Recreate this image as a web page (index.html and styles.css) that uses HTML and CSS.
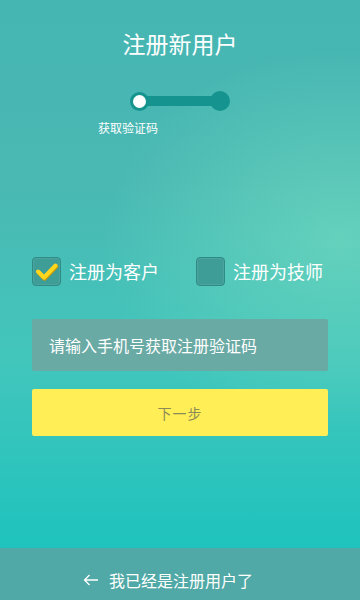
FILE: index.html
```html
<!DOCTYPE html>
<html lang="zh">
<head>
<meta charset="utf-8">
<link rel="stylesheet" href="styles.css">
</head>
<body>
<div class="page">
  <h1 class="title">注册新用户</h1>
  <div class="stepper">
    <span class="dot dot-active"></span>
    <span class="bar"></span>
    <span class="dot dot-end"></span>
  </div>
  <div class="step-label">获取验证码</div>
  <div class="roles">
    <label class="role">
      <span class="box">
        <svg viewBox="0 0 29 29" width="29" height="29"><path d="M6 14.5 L12 20.5 L23.5 8.5" fill="none" stroke="#c99b08" stroke-width="4.5" stroke-linecap="round" stroke-linejoin="round" transform="translate(0.6 1)"/><path d="M6 14.5 L12 20.5 L23.5 8.5" fill="none" stroke="#ffd61e" stroke-width="4" stroke-linecap="round" stroke-linejoin="round"/></svg>
      </span>
      <span class="role-text">注册为客户</span>
    </label>
    <label class="role">
      <span class="box"></span>
      <span class="role-text">注册为技师</span>
    </label>
  </div>
  <div class="input">请输入手机号获取注册验证码</div>
  <div class="btn">下一步</div>
  <div class="spacer"></div>
  <div class="footer">
    <span class="arrow">
      <svg viewBox="0 0 16 12" width="16" height="12"><path d="M15 6 H1.5 M6.5 1 L1.5 6 L6.5 11" fill="none" stroke="#fff" stroke-width="1.3"/></svg>
    </span>
    <span>我已经是注册用户了</span>
  </div>
</div>
</body>
</html>
```
FILE: styles.css
```css
html, body {
  margin: 0;
  padding: 0;
}
body {
  width: 360px;
  height: 600px;
  overflow: hidden;
  font-family: "Noto Sans CJK SC", "Noto Sans", sans-serif;
  color: #fff;
}
.page {
  height: 600px;
  display: flex;
  flex-direction: column;
  background:
    radial-gradient(ellipse 240px 190px at 340px 240px, rgba(115, 220, 192, 0.65), rgba(115, 220, 192, 0) 100%),
    linear-gradient(180deg, #46b6b3 0%, #4ab8b3 30%, #42c6bc 60%, #22c3bd 88%, #1cc0bc 100%);
}
.title {
  margin: 0;
  padding-top: 29px;
  font-size: 23px;
  line-height: 28px;
  font-weight: 400;
  text-align: center;
}
.stepper {
  margin: 34px 0 0 130px;
  width: 100px;
  height: 20px;
  display: flex;
  align-items: center;
}
.dot {
  width: 19px;
  height: 19px;
  border-radius: 50%;
  box-sizing: border-box;
  flex: none;
}
.dot-active {
  background: #fff;
  border: 3px solid #15938f;
  position: relative;
  z-index: 1;
}
.dot-end {
  background: #15938f;
  width: 20px;
  height: 20px;
}
.bar {
  flex: 1;
  height: 10px;
  background: #15938f;
  margin: 0 -2px;
}
.step-label {
  margin: 10px 0 0 98px;
  font-size: 12px;
  line-height: 14px;
}
.roles {
  margin: 121px 0 0 32px;
  display: flex;
  height: 30px;
  gap: 37px;
}
.role {
  display: flex;
  align-items: center;
  gap: 8px;
}
.box {
  width: 29px;
  height: 29px;
  box-sizing: border-box;
  border-radius: 4px;
  background: #3e9d97;
  border: 1px solid #2f8b86;
  box-shadow: inset 0 0 0 1px rgba(255,255,255,0.08);
  display: flex;
}
.box svg {
  margin: -1px;
}
.role-text {
  font-size: 18px;
  line-height: 22px;
}
.input {
  margin: 33px 32px 0 32px;
  height: 52px;
  box-sizing: border-box;
  padding-left: 17px;
  display: flex;
  align-items: center;
  background: #6aaaa5;
  border-radius: 2px;
  font-size: 16px;
}
.btn {
  margin: 18px 32px 0 32px;
  height: 47px;
  display: flex;
  align-items: center;
  justify-content: center;
  background: #ffee55;
  border-radius: 2px;
  color: #8b8a57;
  font-size: 14px;
  letter-spacing: 1px;
}
.spacer {
  flex: 1;
}
.footer {
  height: 52px;
  background: #50a9a6;
  display: flex;
  align-items: center;
  justify-content: center;
  gap: 10px;
  font-size: 16px;
  padding-top: 12px;
  box-sizing: border-box;
  padding-right: 24px;
}
.arrow {
  display: flex;
}
```
